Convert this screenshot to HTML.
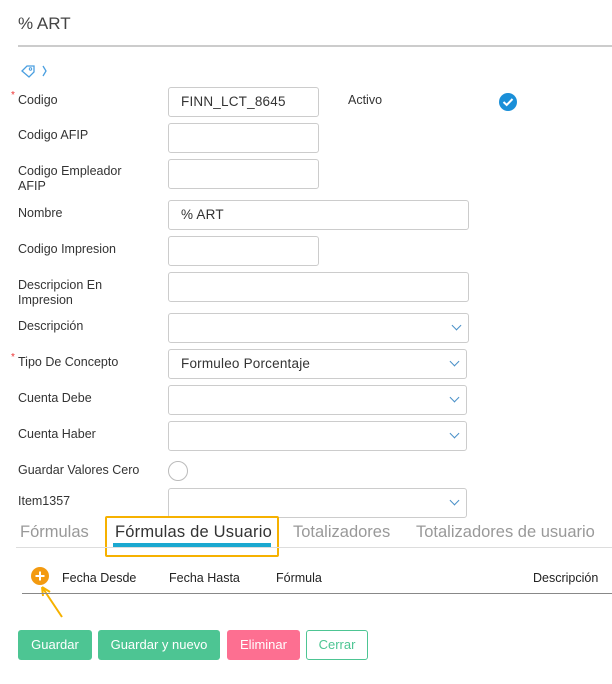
<!DOCTYPE html>
<html><head><style>
body{margin:0;width:612px;height:684px;background:#fff;font-family:"Liberation Sans",sans-serif;position:relative;overflow:hidden;color:#333}
.a{position:absolute}
.l{position:absolute;left:18px;font-size:12.5px;color:#333;line-height:15px}
.i{position:absolute;left:168px;height:28px;border:1px solid #ccc;border-radius:3px;background:#fff;font-size:13.5px;color:#333;line-height:28px;padding-left:12px;box-sizing:content-box;letter-spacing:0.2px}
.c{position:absolute;right:8px;top:8px;width:6px;height:6px;border-right:1px solid #4a90c8;border-bottom:1px solid #4a90c8;transform:rotate(45deg)}
.t{position:absolute;top:523px;font-size:16.5px;color:#999}
.h{position:absolute;top:571px;font-size:12.5px;color:#222}
.b{position:absolute;top:630px;height:30px;line-height:30px;color:#fff;font-size:13px;text-align:center;border-radius:3px}
</style></head><body>
<div class="a" style="left:18px;top:14px;font-size:17px;color:#444">% ART</div>
<div class="a" style="left:18px;top:45px;width:594px;height:2px;background:#ccc"></div>
<svg class="a" style="left:20px;top:62px" width="30" height="18" viewBox="0 0 30 18"><path d="M2 9 L7 4 L14 4 L14 10 L9 15 Z" fill="none" stroke="#4a9fe0" stroke-width="1.3"/><circle cx="10.5" cy="7" r="1.2" fill="none" stroke="#4a9fe0"/><path d="M23 4 L26 9 L23 14" fill="none" stroke="#4a9fe0" stroke-width="1.3"/></svg>
<div class="a" style="left:11px;top:90px;color:#e33;font-size:10px">*</div>
<div class="l" style="top:93px">Codigo</div>
<div class="i" style="top:87px;width:137px">FINN_LCT_8645</div>
<div class="a" style="left:348px;top:93px;font-size:12.5px">Activo</div>
<svg class="a" style="left:498px;top:92px" width="20" height="20"><circle cx="10" cy="10" r="9" fill="#1a8fd8"/><path d="M5.5 10 L8.7 13 L14.5 7" fill="none" stroke="#fff" stroke-width="2"/></svg>
<div class="l" style="top:128px">Codigo AFIP</div>
<div class="i" style="top:123px;width:137px"></div>
<div class="l" style="top:164px">Codigo Empleador<br>AFIP</div>
<div class="i" style="top:159px;width:137px"></div>
<div class="l" style="top:206px">Nombre</div>
<div class="i" style="top:200px;width:287px">% ART</div>
<div class="l" style="top:242px">Codigo Impresion</div>
<div class="i" style="top:236px;width:137px"></div>
<div class="l" style="top:278px">Descripcion En<br>Impresion</div>
<div class="i" style="top:272px;width:287px"></div>
<div class="l" style="top:319px">Descripción</div>
<div class="i" style="top:313px;width:287px"><div class="c"></div></div>
<div class="a" style="left:11px;top:352px;color:#e33;font-size:10px">*</div>
<div class="l" style="top:355px">Tipo De Concepto</div>
<div class="i" style="top:349px;width:285px">Formuleo Porcentaje<div class="c"></div></div>
<div class="l" style="top:391px">Cuenta Debe</div>
<div class="i" style="top:385px;width:285px"><div class="c"></div></div>
<div class="l" style="top:427px">Cuenta Haber</div>
<div class="i" style="top:421px;width:285px"><div class="c"></div></div>
<div class="l" style="top:463px">Guardar Valores Cero</div>
<div class="a" style="left:168px;top:461px;width:18px;height:18px;border:1px solid #bbb;border-radius:50%"></div>
<div class="l" style="top:494px">Item1357</div>
<div class="i" style="top:488px;width:285px"><div class="c"></div></div>
<div class="t" style="left:20px">Fórmulas</div>
<div class="a" style="left:105px;top:516px;width:170px;height:37px;border:2px solid #f6b100;border-radius:2px"></div>
<div class="t" style="left:115px;color:#333;letter-spacing:0.2px">Fórmulas de Usuario</div>
<div class="a" style="left:113px;top:543px;width:158px;height:4px;background:#1ba8d0"></div>
<div class="t" style="left:293px">Totalizadores</div>
<div class="t" style="left:416px">Totalizadores de usuario</div>
<div class="a" style="left:16px;top:547px;width:596px;height:1px;background:#ddd"></div>
<svg class="a" style="left:28px;top:564px" width="50" height="56"><circle cx="12" cy="12" r="9" fill="#f39a10"/><path d="M12 7.5V16.5M7.5 12H16.5" stroke="#fff" stroke-width="2"/><path d="M14 23 L34 53 M14 23 L15 32 M14 23 L22 28" stroke="#f6b100" stroke-width="2" fill="none"/></svg>
<div class="h" style="left:62px">Fecha Desde</div>
<div class="h" style="left:169px">Fecha Hasta</div>
<div class="h" style="left:276px">Fórmula</div>
<div class="h" style="left:533px">Descripción</div>
<div class="a" style="left:22px;top:593px;width:590px;height:1px;background:#888"></div>
<div class="b" style="left:18px;width:74px;background:#4dc593">Guardar</div>
<div class="b" style="left:98px;width:122px;background:#4dc593">Guardar y nuevo</div>
<div class="b" style="left:227px;width:73px;background:#fd6f91">Eliminar</div>
<div class="b" style="left:306px;width:60px;height:28px;line-height:28px;border:1px solid #4dc593;color:#4dc593;background:#fff">Cerrar</div>
</body></html>
